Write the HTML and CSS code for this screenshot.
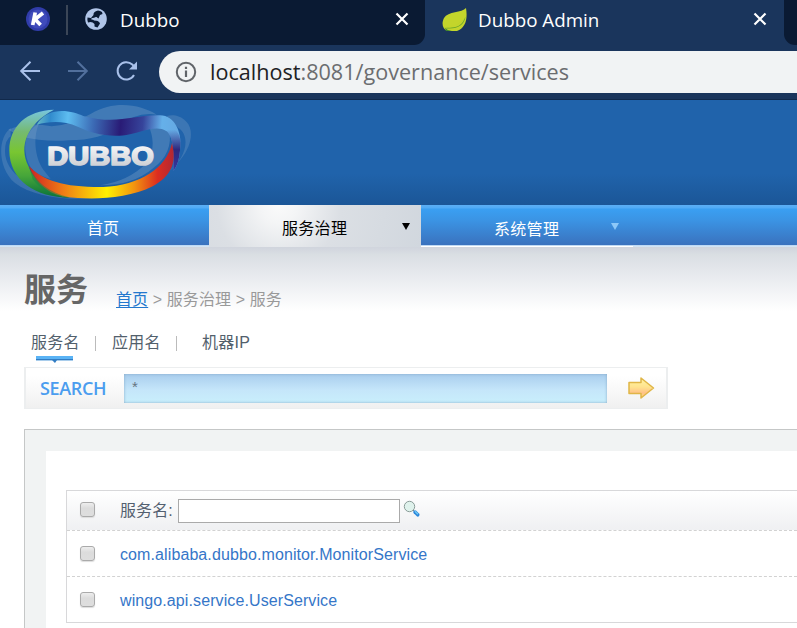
FILE: index.html
```html
<!DOCTYPE html>
<html lang="zh-CN">
<head>
<meta charset="utf-8">
<title>Dubbo Admin</title>
<link rel="stylesheet" href="styles.css">
</head>
<body>
<div class="tabstrip">
  <div class="tab-group first">
    <svg class="k-icon" width="24" height="24" viewBox="0 0 24 24"><circle cx="12" cy="12" r="12" fill="#303ca9"/><circle cx="12" cy="12" r="9.5" fill="#3f4bbb"/><path d="M9.2 5.500 6.700 18M17 6 9 12.300 14.600 18" fill="none" stroke="#fff" stroke-width="3.700"/></svg>
    <span class="divider"></span>
    <svg class="globe" width="22" height="22" viewBox="0 0 22 22"><circle cx="11" cy="11" r="10.800" fill="#b0c5e8"/><path d="M13 2.500Q8 3.500 8.500 7L6 10 2.500 9.500Q2 12.500 3 14.500q4-1.500 6.500 1.500v2.500l3 1 2.500-4-1.500-2.500-4.500-.5L7.500 11l3.500-2 2.500 1.500L15 7l2.500-1-.5-2Q15 2.500 13 2.500Z" fill="#0a1a33"/><path d="m6.500 11 5-.8 2.500 3" fill="none" stroke="#b0c5e8" stroke-width="1.700"/></svg>
    <span class="tab-title">Dubbo</span>
    <svg class="close" width="14" height="14" viewBox="0 0 14 14"><path d="m1.500 1.500 11 11m0-11-11 11"/></svg>
  </div>
  <div class="tab-group active">
    <svg class="leaf" width="26" height="25" viewBox="0 0 26 25"><path d="M24 1C20 6 6 4 2 11-1 17 1 22 5 24h10C23 21 26 13 24 1Z" fill="#c3d52b"/><path d="M2 21c8 0 16-3 21.500-11C22 19 14 23 2 21Z" fill="#6ca62c"/><path d="M5 20c8-1 14-4 18-10-2 8-9 12-18 10Z" fill="#c3d52b"/><path d="M3 21q3 3 7 3H4Z" fill="#41862f"/></svg>
    <span class="tab-title">Dubbo Admin</span>
    <svg class="close" width="14" height="14" viewBox="0 0 14 14"><path d="m1.500 1.500 11 11m0-11-11 11"/></svg>
  </div>
  <div class="tab-group last"></div>
</div>
<div class="toolbar">
  <svg class="nav-icons" width="159" height="48" viewBox="0 0 159 48" fill="none" stroke="#a9c1ea" stroke-width="2"><path d="M40 26H21.500m9-9.300L21.200 26l9.300 9.300"/><path stroke="#52709d" d="M68 26h18.500m-9-9.300 9.300 9.300-9.300 9.300"/><path d="M134 30A8.700 8.700 0 1 1 132.300 19.500l2.500 2.500"/><path d="M137 16.500v8h-8z" fill="#a9c1ea" stroke="none"/></svg>
  <div class="omnibox">
    <svg width="22" height="22" viewBox="0 0 22 22"><circle cx="11" cy="11" r="9.200" fill="none" stroke="#606469" stroke-width="2"/><path d="M11 9.500v6.500M11 5.800v2.200" stroke="#606469" stroke-width="2.200"/></svg>
    <span class="url"><b>localhost</b>:8081/governance/services</span>
  </div>
</div>
<header class="header">
  <svg class="logo" width="210" height="105" viewBox="0 6 630 315">
    <defs>
      <linearGradient id="top" x1="100" x2="540" y1="30" y2="70" gradientUnits="userSpaceOnUse"><stop offset="0" stop-color="#79c9c0"/><stop offset=".12" stop-color="#318bcd"/><stop offset=".24" stop-color="#5ebdf0"/><stop offset=".42" stop-color="#3b69b4"/><stop offset=".6" stop-color="#291b76"/><stop offset=".75" stop-color="#36449b"/><stop offset=".88" stop-color="#65b0e9"/><stop offset="1" stop-color="#65a8e2"/></linearGradient>
      <linearGradient id="left" x1="0" x2="0" y1="35" y2="300" gradientUnits="userSpaceOnUse"><stop offset="0" stop-color="#78c6df"/><stop offset=".25" stop-color="#75ba71"/><stop offset=".48" stop-color="#79c631"/><stop offset=".75" stop-color="#46a63a"/><stop offset="1" stop-color="#08713a"/></linearGradient>
      <linearGradient id="bottom" x1="90" x2="525" y1="0" y2="0" gradientUnits="userSpaceOnUse"><stop offset="0" stop-color="#ce2422"/><stop offset=".22" stop-color="#ef7916"/><stop offset=".53" stop-color="#fff100"/><stop offset=".72" stop-color="#f2930f"/><stop offset=".88" stop-color="#dc2d20"/><stop offset="1" stop-color="#ad2736"/></linearGradient>
      <linearGradient id="right" x1="0" x2="0" y1="95" y2="215" gradientUnits="userSpaceOnUse"><stop offset="0" stop-color="#2d287e" stop-opacity="0"/><stop offset=".5" stop-color="#2d287e"/><stop offset="1" stop-color="#35389d"/></linearGradient>
      <linearGradient id="word" x1="0" x2="0" y1="0" y2="1"><stop offset="0" stop-color="#fff"/><stop offset="1" stop-color="#c4c7cd"/></linearGradient>
    </defs>
    <g fill="#8eafd0">
      <path d="M32 90C-8 120-8 210 45 255 130 320 330 315 440 255 560 210 595 110 560 72 540 50 515 50 500 54L535 90C570 110 565 180 500 225 400 290 300 292 210 292 90 280 15 225 15 160Q15 125 32 115Z" opacity=".25"/>
      <path d="M25 95Q80 70 155 85 215 80 273 47C345 5 423 20 470 50Q410 40 355 85 305 127 205 127 135 133 60 115Z" opacity=".3"/>
      <path d="M118 75C100 110 102 175 130 215L152 243Q100 230 85 195 55 115 118 75Z" opacity=".25"/>
      <path d="M450 94Q485 75 508 95 520 165 460 210 400 262 300 262 385 250 440 195 470 150 450 94Z" opacity=".3"/>
    </g>
    <path d="M110 80C145 22 215 38 250 54 350 82 400 50 480 52 525 52 545 105 541 145 538 190 530 208 520 218 522 150 518 116 500 100 470 80 425 102 390 109 330 122 270 104 235 87 185 65 145 72 110 80Z" fill="url(#top)"/>
    <path d="M500 95C525 80 545 110 541 145 538 190 530 208 520 218 522 150 518 116 500 100Z" fill="url(#right)"/>
    <path d="M162 35C80 37 28 85 28 157c0 90 78 142 182 142-61-16-108-48-125-95C56 144 80 78 162 35Z" fill="url(#left)"/>
    <path d="M87 204C130 250 195 268 310 267 420 262 500 210 516 135 532 200 510 235 458 265 380 305 270 305 198 297 146 289 102 253 87 204Z" fill="url(#bottom)"/>
    <path d="M87 204c20 50 63 80 120 94-46 0-85-22-109-54Z" fill="#178343" opacity=".5"/>
    <text x="142" y="200" textLength="320" lengthAdjust="spacingAndGlyphs" font-family="Liberation Sans, sans-serif" font-weight="700" font-size="79" fill="url(#word)" stroke="url(#word)" stroke-width="5" stroke-linejoin="round">DUBBO</text>
  </svg>
</header>
<nav class="nav">
  <a class="item home">首页</a>
  <a class="item current"><span class="label">服务治理</span><i class="caret"></i></a>
  <a class="item system"><span class="label">系统管理</span><i class="caret"></i></a>
</nav>
<main class="main">
  <div class="heading"><h1>服务</h1><div class="crumbs"><a>首页</a> &gt; 服务治理 &gt; 服务</div></div>
  <div class="search-tabs">
    <span class="stab selected">服务名<svg class="marker" width="37" height="7" viewBox="0 0 37 7"><path d="M0 0h37v5H0z" fill="#a9cdec"/><path d="M0 0h37v3H0z" fill="#5ab3f5"/><path d="M0 3h37v1H21l-2 3-3-3H0z" fill="#327dc3"/></svg></span><i class="sep"></i><span class="stab">应用名</span><i class="sep two"></i><span class="stab ip">机器IP</span>
  </div>
  <div class="search">
    <span class="search-label">SEARCH</span>
    <div class="search-input">*</div>
    <svg width="29" height="24" viewBox="0 0 29 24"><defs><linearGradient id="arrow" x2="0" y2="1"><stop stop-color="#fff5a4"/><stop offset=".45" stop-color="#ffe38e"/><stop offset=".75" stop-color="#ffc187"/><stop offset="1" stop-color="#ffde7b"/></linearGradient></defs><path d="M2 6.500h12V2l12.500 10L14 22v-4.500H2Z" fill="url(#arrow)" stroke="#e0b647" stroke-width="1.500" stroke-linejoin="round"/></svg>
  </div>
  <section class="panel">
    <div class="sheet">
      <div class="table">
        <div class="row head"><i class="check"></i><label>服务名:</label><div class="filter"></div>
          <svg class="lens" width="18" height="18" viewBox="0 0 18 18"><circle cx="6.500" cy="6.500" r="5.200" fill="#dff2ec" stroke="#8a9c98"/><path d="m10 10 1.500 1.500" stroke="#738891"/><path d="m12 12 2.800 2.800" stroke="#2b86d9" stroke-width="3.500" stroke-linecap="round"/><path d="m12 11.300 3 3" stroke="#6cc7f5" stroke-width="1.500"/></svg>
        </div>
        <div class="row"><i class="check"></i><a>com.alibaba.dubbo.monitor.MonitorService</a></div>
        <div class="row final"><i class="check"></i><a>wingo.api.service.UserService</a></div>
      </div>
    </div>
  </section>
</main>
</body>
</html>
```
FILE: styles.css
```css
* { box-sizing: border-box; }
html, body { margin: 0; height: 628px; overflow: hidden; }
body { background: #fff; font: 16px/20px "Liberation Sans", "Noto Sans CJK SC", sans-serif; display: flex; flex-direction: column; }
svg { display: block; flex: none; }
i { font-style: normal; }
.tabstrip { flex: none; height: 45px; display: flex; background: #1a355c; overflow: hidden; }
.tab-group { display: flex; background: #0a1a33; height: 45px; flex: none; }
.tab-group.first { width: 425px; border-bottom-right-radius: 11px; }
.tab-group.active { width: 359px; background: #1a355c; }
.tab-group.last { width: 13px; border-bottom-left-radius: 11px; }
.k-icon { margin: 7px 0 0 26px; }
.divider { width: 2px; height: 30px; margin: 5px 17px 0 16px; background: #3b4657; }
.globe { margin-top: 8px; }
.tab-title { color: #fff; font: 18.8px/24px "Open Sans", sans-serif; margin: 8px 0 0 13px; white-space: nowrap; }
.close { margin: 12px 16px 0 auto; fill: none; stroke: #fff; stroke-width: 2.2; }
.leaf { margin: 7px 0 0 17px; }
.leaf + .tab-title { margin-left: 10px; }
.active .close { margin-right: 17px; }
.toolbar { flex: none; height: 55px; display: flex; background: #1a355c; border-bottom: 1px solid #11294b; }
.omnibox { flex: 1; height: 42px; margin-top: 6px; padding-left: 16px; border-radius: 21px 0 0 21px; background: #f1f3f4; display: flex; align-items: center; }
.url { margin-left: 13px; font: 21.6px/30px "Open Sans", sans-serif; color: #6b6d70; white-space: nowrap; }
.url b { font-weight: 400; color: #202124; }
.header { flex: none; height: 105px; background: linear-gradient(#2063ab 0, #2063ab 70%, #1b5697); }
.nav { flex: none; height: 42px; display: flex; background: linear-gradient(#5caef4 0, #50aaf5 3px, #3a9ff2 4px, #3b94e4 15px, #3a72be 40px, #b5d4f4 40px, #dbe9f5 42px); }
.item { display: flex; align-items: center; color: #fff; height: 42px; }
.home { width: 209px; justify-content: center; padding: 5px 3px 0 0; }
.current { width: 212px; padding: 6px 0 0 73px; color: #000; background: radial-gradient(circle at 33% 0, #fafafa 0, #f4f5f6 12%, #dbdfe4 42%, #d1d7de 100%); }
.system { width: 212px; padding: 8px 0 0 73px; border-bottom: 1px solid #fff; }
.label { width: 66px; letter-spacing: .3px; white-space: nowrap; }
.caret { margin: -5px 0 0 54px; border: 4px solid transparent; border-top: 7px solid #000; border-bottom: 0; }
.system .caret { margin: -6px 0 0 51px; border-top-color: #8dc8f8; }
.main { flex: 1; padding-left: 24px; background: linear-gradient(#d0d4dd 0, #dadfe3 8px, #e2e5ea 20px, #fff 64px); }
.heading { display: flex; height: 75px; }
h1 { margin: 23px 0 0; width: 92px; font-size: 32px; line-height: 41px; color: #666; }
.crumbs { margin-top: 43px; font-size: 16px; letter-spacing: .1px; color: #999; white-space: nowrap; }
.crumbs a { color: #2378ce; text-decoration: underline; text-underline-offset: 2px; }
.search-tabs { display: flex; height: 45px; align-items: flex-start; padding: 11px 0 0 7px; color: #52606c; }
.stab { position: relative; width: 48px; letter-spacing: .3px; white-space: nowrap; }
.marker { position: absolute; left: 5px; top: 23px; }
.sep { width: 1px; height: 15px; margin: 3px 16px 0; background: #bbb; }
.sep.two { margin-right: 25px; }
.search { width: 644px; height: 42px; border: 2px solid #eceeef; border-width: 1px 2px; background: linear-gradient(#fff 20%, #f0f0f0); display: flex; align-items: center; }
.search-label { width: 98px; padding-left: 14px; color: #4b9def; letter-spacing: -.35px; font: 600 18px/24px "Open Sans", sans-serif; }
.search-input { width: 483px; height: 29px; margin-right: 20px; padding: 3px 8px; color: #667480; font-size: 15px; background: linear-gradient(#a9cded, #c5e6fa 55%, #c9effc); box-shadow: inset 0 0 3px #87abc8; }
.panel { margin-top: 20px; height: 199px; padding: 21px 0 0 21px; background: #f1f3f3; border: solid #c5c7c7; border-width: 1px 0 0 1px; }
.sheet { height: 177px; padding: 39px 0 0 20px; background: #fff; }
.table { border: 1px solid #d8d8da; border-right: 0; height: 133px; }
.row { height: 46px; display: flex; align-items: center; padding-left: 13px; border-bottom: 1px dashed #d2d2d2; }
.row.head { height: 40px; background: linear-gradient(#fff, #eff0f2); color: #536070; }
.row.final { border: 0; height: 45px; }
.row a { color: #3576c8; letter-spacing: .1px; margin-top: 2px; }
.check { flex: none; width: 15px; height: 15px; margin: 0 25px 0 0; border: 1px solid #aaa; border-radius: 3px; background: linear-gradient(#eee, #dcdcdc 40%, #dedede); box-shadow: 0 1px 1px #ddd; }
.head .check { margin-top: -2px; }
.head label { width: 58px; letter-spacing: .1px; white-space: nowrap; }
.filter { width: 222px; height: 24px; margin: 0 3px 0 0; border: 1px solid #aaa; background: #fff; }
.lens { margin-top: -4px; }
```
